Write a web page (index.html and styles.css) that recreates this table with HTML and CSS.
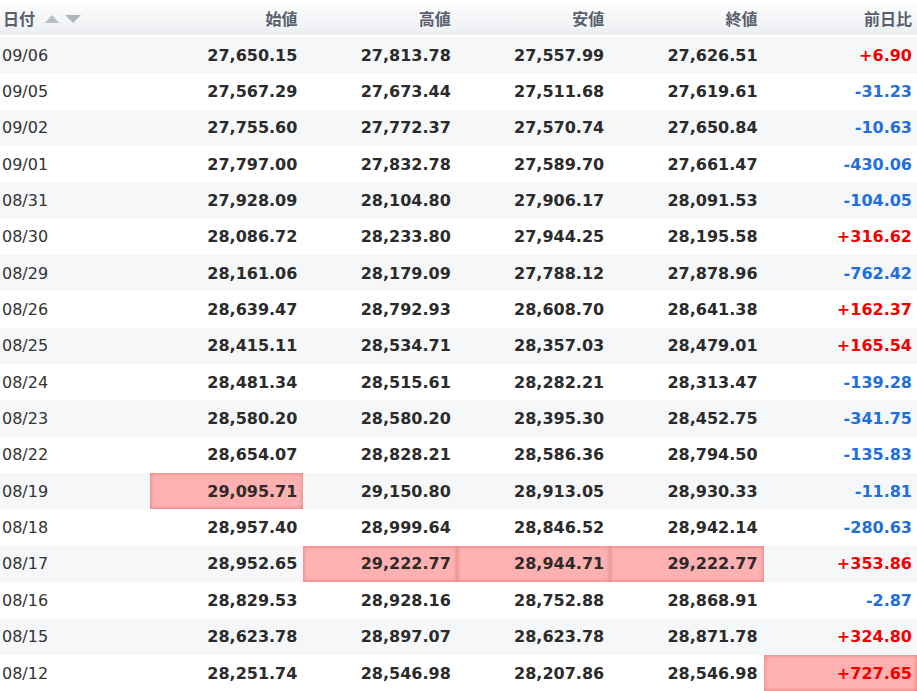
FILE: index.html
```html
<!DOCTYPE html>
<html lang="ja">
<head>
<meta charset="utf-8">
<link rel="stylesheet" href="styles.css">
</head>
<body>
<table class="quotes">
<colgroup><col class="c-date"><col><col><col><col><col></colgroup>
<thead>
<tr>
<th class="date-h">日付<span class="sort"><span class="up"></span><span class="down"></span></span></th>
<th>始値</th><th>高値</th><th>安値</th><th>終値</th><th>前日比</th>
</tr>
</thead>
<tbody>
<tr><td class="d">09/06</td><td>27,650.15</td><td>27,813.78</td><td>27,557.99</td><td>27,626.51</td><td class="pos">+6.90</td></tr>
<tr><td class="d">09/05</td><td>27,567.29</td><td>27,673.44</td><td>27,511.68</td><td>27,619.61</td><td class="neg">-31.23</td></tr>
<tr><td class="d">09/02</td><td>27,755.60</td><td>27,772.37</td><td>27,570.74</td><td>27,650.84</td><td class="neg">-10.63</td></tr>
<tr><td class="d">09/01</td><td>27,797.00</td><td>27,832.78</td><td>27,589.70</td><td>27,661.47</td><td class="neg">-430.06</td></tr>
<tr><td class="d">08/31</td><td>27,928.09</td><td>28,104.80</td><td>27,906.17</td><td>28,091.53</td><td class="neg">-104.05</td></tr>
<tr><td class="d">08/30</td><td>28,086.72</td><td>28,233.80</td><td>27,944.25</td><td>28,195.58</td><td class="pos">+316.62</td></tr>
<tr><td class="d">08/29</td><td>28,161.06</td><td>28,179.09</td><td>27,788.12</td><td>27,878.96</td><td class="neg">-762.42</td></tr>
<tr><td class="d">08/26</td><td>28,639.47</td><td>28,792.93</td><td>28,608.70</td><td>28,641.38</td><td class="pos">+162.37</td></tr>
<tr><td class="d">08/25</td><td>28,415.11</td><td>28,534.71</td><td>28,357.03</td><td>28,479.01</td><td class="pos">+165.54</td></tr>
<tr><td class="d">08/24</td><td>28,481.34</td><td>28,515.61</td><td>28,282.21</td><td>28,313.47</td><td class="neg">-139.28</td></tr>
<tr><td class="d">08/23</td><td>28,580.20</td><td>28,580.20</td><td>28,395.30</td><td>28,452.75</td><td class="neg">-341.75</td></tr>
<tr><td class="d">08/22</td><td>28,654.07</td><td>28,828.21</td><td>28,586.36</td><td>28,794.50</td><td class="neg">-135.83</td></tr>
<tr><td class="d">08/19</td><td class="hi">29,095.71</td><td>29,150.80</td><td>28,913.05</td><td>28,930.33</td><td class="neg">-11.81</td></tr>
<tr><td class="d">08/18</td><td>28,957.40</td><td>28,999.64</td><td>28,846.52</td><td>28,942.14</td><td class="neg">-280.63</td></tr>
<tr><td class="d">08/17</td><td>28,952.65</td><td class="hi">29,222.77</td><td class="hi">28,944.71</td><td class="hi">29,222.77</td><td class="pos">+353.86</td></tr>
<tr><td class="d">08/16</td><td>28,829.53</td><td>28,928.16</td><td>28,752.88</td><td>28,868.91</td><td class="neg">-2.87</td></tr>
<tr><td class="d">08/15</td><td>28,623.78</td><td>28,897.07</td><td>28,623.78</td><td>28,871.78</td><td class="pos">+324.80</td></tr>
<tr><td class="d">08/12</td><td>28,251.74</td><td>28,546.98</td><td>28,207.86</td><td>28,546.98</td><td class="pos hi">+727.65</td></tr>
</tbody>
</table>
</body>
</html>
```

FILE: styles.css
```css
html, body {
  margin: 0;
  padding: 0;
  background: #fff;
}
body {
  font-family: "DejaVu Sans", "Noto Sans CJK JP", sans-serif;
  color: #333;
}
.quotes {
  width: 917px;
  border-collapse: collapse;
  table-layout: fixed;
}
.c-date {
  width: 150px;
}
.quotes th {
  height: 37px;
  padding: 0 6px 2px 0;
  text-align: right;
  font-family: "Noto Sans CJK JP", sans-serif;
  font-weight: 700;
  font-size: 16px;
  line-height: 20px;
  color: #58606d;
  background: linear-gradient(#ffffff 0, #eceef2 35px, #ffffff 35px);
  vertical-align: middle;
  box-sizing: border-box;
}
.quotes th:last-child {
  padding-right: 5px;
}
.quotes th.date-h {
  text-align: left;
  padding-left: 3px;
}
.sort {
  display: inline-flex;
  align-items: flex-start;
  gap: 6px;
  margin-left: 10px;
  vertical-align: 2px;
}
.sort .up {
  width: 0;
  height: 0;
  border-left: 7px solid transparent;
  border-right: 7px solid transparent;
  border-bottom: 8px solid #babec4;
}
.sort .down {
  width: 0;
  height: 0;
  border-left: 8px solid transparent;
  border-right: 8px solid transparent;
  border-top: 8px solid #b2b6bc;
}
.quotes td {
  height: 36.35px;
  padding: 0 6px 0 0;
  text-align: right;
  font-weight: 700;
  font-size: 16px;
  color: #2b2b2b;
  vertical-align: middle;
  box-sizing: border-box;
  white-space: nowrap;
}
.quotes td:last-child {
  padding-right: 5px;
}
.quotes tbody tr:nth-child(odd) td {
  background: #f5f7f9;
}
.quotes td.d {
  text-align: left;
  font-weight: 400;
  padding-left: 2px;
  color: #333;
}
.quotes td.pos {
  color: #f20000;
}
.quotes td.neg {
  color: #1f6fdc;
}
.quotes tbody tr td.hi {
  background: #ffb1b1;
  box-shadow: inset 0 0 4px rgba(190, 70, 70, 0.55);
}
```
